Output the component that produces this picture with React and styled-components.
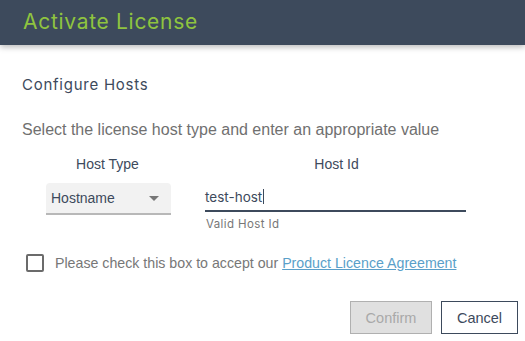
import styled, { createGlobalStyle } from "styled-components";

const GlobalStyle = createGlobalStyle`
  html, body {
    margin: 0;
    padding: 0;
    background: #fff;
  }
  body {
    font-family: "Liberation Sans", Arial, sans-serif;
  }
`;

const Dialog = styled.div`
  width: 525px;
  height: 341px;
  background: #fff;
  overflow: hidden;
`;

const Header = styled.div`
  height: 45px;
  background: #3d4a5c;
  box-shadow: 0 2px 6px rgba(0, 0, 0, 0.28);
  display: flex;
  align-items: center;
  padding: 0 23px;
  position: relative;
`;

const Title = styled.h1`
  margin: 0 0 2px 0;
  font-family: Inter, sans-serif;
  font-weight: 400;
  font-size: 21px;
  color: #8fc43f;
  letter-spacing: 0.7px;
`;

const Body = styled.div`
  padding: 30px 22px 0 22px;
`;

const Subtitle = styled.h2`
  margin: 0;
  font-family: Inter, sans-serif;
  font-weight: 400;
  font-size: 15px;
  color: #3d4a5c;
  letter-spacing: 0.75px;
`;

const Lead = styled.p`
  margin: 27px 0 0 0;
  font-size: 16px;
  color: #707070;
`;

const Fields = styled.div`
  display: flex;
  margin-top: 17px;
  margin-left: 24px;
  gap: 34px;
`;

const Field = styled.div`
  display: flex;
  flex-direction: column;
  width: ${(p) => p.$width}px;
`;

const FieldLabel = styled.div`
  font-size: 14px;
  color: #3d4a5c;
  text-align: center;
  margin-left: ${(p) => p.$shift || 0}px;
  height: 16px;
  margin-bottom: 11px;
`;

const Select = styled.div`
  height: 30px;
  background: #f2f2f2;
  border-radius: 4px 4px 0 0;
  border-bottom: 2px solid #b8b8b8;
  display: flex;
  align-items: center;
  justify-content: space-between;
  padding: 0 12px 0 5px;
  font-size: 14px;
  color: #3d4a5c;
`;

const Arrow = styled.span`
  width: 0;
  height: 0;
  border-left: 5px solid transparent;
  border-right: 5px solid transparent;
  border-top: 5px solid #777;
`;

const Input = styled.div`
  height: 27px;
  border-bottom: 2px solid #3d4a5c;
  display: flex;
  align-items: center;
  font-family: Inter, sans-serif;
  font-size: 13.5px;
  color: #3d4a5c;
  padding-left: 0;
`;

const Caret = styled.span`
  display: inline-block;
  width: 1px;
  height: 15px;
  background: #3d4a5c;
  margin-left: 1px;
`;

const Hint = styled.div`
  font-family: Inter, sans-serif;
  font-size: 11.5px;
  letter-spacing: 0.4px;
  color: #777;
  margin-top: 5px;
  padding-left: 1px;
`;

const AgreeRow = styled.div`
  display: flex;
  align-items: center;
  margin-top: 23px;
  margin-left: 4px;
  gap: 11px;
  font-size: 14.2px;
  color: #777;
`;

const Box = styled.span`
  width: 14px;
  height: 14px;
  border: 2px solid #6b6b6b;
  border-radius: 2px;
`;

const Link = styled.a`
  color: #5a9fc9;
  text-decoration: underline;
`;

const Actions = styled.div`
  display: flex;
  justify-content: flex-end;
  gap: 9px;
  padding: 0 7px;
  margin-top: 29px;
`;

const Button = styled.button`
  height: 33px;
  padding: 0;
  width: ${(p) => p.$width}px;
  font-family: "Liberation Sans", Arial, sans-serif;
  font-size: 14.5px;
  background: ${(p) => (p.$disabled ? "#e0e0e0" : "#fff")};
  color: ${(p) => (p.$disabled ? "#a9a9a9" : "#3d4a5c")};
  border: 1px solid ${(p) => (p.$disabled ? "#b0b0b0" : "#3d4a5c")};
  border-radius: 0;
`;

export default function App() {
  return (
    <>
      <GlobalStyle />
      <Dialog>
        <Header>
          <Title>Activate License</Title>
        </Header>
        <Body>
          <Subtitle>Configure Hosts</Subtitle>
          <Lead>Select the license host type and enter an appropriate value</Lead>
          <Fields>
            <Field $width={125}>
              <FieldLabel $shift={-2}>Host Type</FieldLabel>
              <Select>
                Hostname
                <Arrow />
              </Select>
            </Field>
            <Field $width={261}>
              <FieldLabel $shift={2}>Host Id</FieldLabel>
              <Input>
                test-host
                <Caret />
              </Input>
              <Hint>Valid Host Id</Hint>
            </Field>
          </Fields>
          <AgreeRow>
            <Box />
            <span>
              Please check this box to accept our{" "}
              <Link href="#">Product Licence Agreement</Link>
            </span>
          </AgreeRow>
        </Body>
        <Actions>
          <Button $width={82} $disabled>
            Confirm
          </Button>
          <Button $width={77}>Cancel</Button>
        </Actions>
      </Dialog>
    </>
  );
}
